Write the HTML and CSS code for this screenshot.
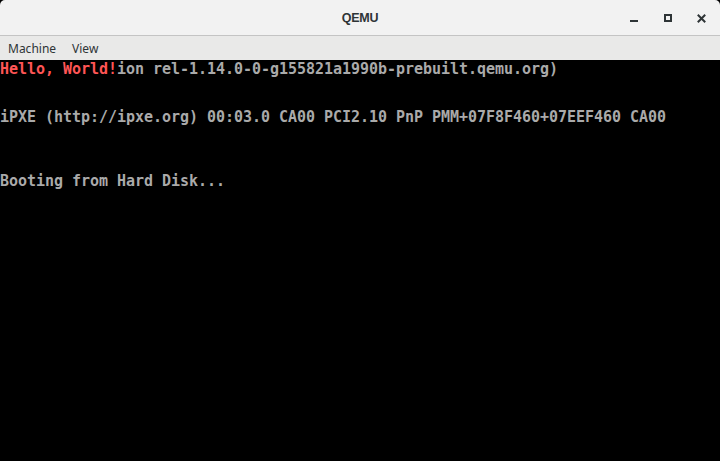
FILE: index.html
```html
<!DOCTYPE html>
<html>
<head>
<meta charset="utf-8">
<link rel="stylesheet" href="styles.css">
</head>
<body>
<div class="window">
  <header class="titlebar">
    <div class="title">QEMU</div>
    <div class="controls">
      <span class="ctl">
        <svg width="10" height="10" viewBox="0 0 10 10"><rect x="1" y="7" width="8" height="2" fill="#2e3436"/></svg>
      </span>
      <span class="ctl ctl-max">
        <svg width="10" height="10" viewBox="0 0 10 10"><rect x="1" y="2" width="6" height="6" fill="none" stroke="#2e3436" stroke-width="2"/></svg>
      </span>
      <span class="ctl">
        <svg width="10" height="10" viewBox="0 0 10 10"><path d="M1.5 2.5 L7.5 8.5 M7.5 2.5 L1.5 8.5" stroke="#2e3436" stroke-width="2" stroke-linecap="square"/></svg>
      </span>
    </div>
  </header>
  <nav class="menubar">
    <span class="menu">Machine</span>
    <span class="menu">View</span>
  </nav>
  <main class="screen">
<pre class="vga"><span class="red">Hello, World!</span>ion rel-1.14.0-0-g155821a1990b-prebuilt.qemu.org)


iPXE (http://ipxe.org) 00:03.0 CA00 PCI2.10 PnP PMM+07F8F460+07EEF460 CA00



Booting from Hard Disk...</pre>
  </main>
</div>
</body>
</html>
```
FILE: styles.css
```css
html, body {
  margin: 0;
  padding: 0;
  background: #000;
  height: 100%;
}
.window {
  display: flex;
  flex-direction: column;
  width: 720px;
  height: 461px;
  overflow: hidden;
}
.titlebar {
  position: relative;
  height: 35px;
  background: #f2f2f2;
  border-bottom: 1px solid #c4c4c4;
  border-radius: 5px 5px 0 0;
  display: flex;
  align-items: center;
  justify-content: center;
  flex: none;
}
.title {
  font-family: "Liberation Sans", Arial, sans-serif;
  font-weight: bold;
  font-size: 12.5px;
  color: #2e3436;
  letter-spacing: -0.2px;
}
.controls {
  position: absolute;
  right: 13px;
  top: 13px;
  display: flex;
  gap: 23px;
}
.ctl {
  display: flex;
  width: 10px;
  height: 10px;
}
.ctl:first-child {
  margin-right: 2px;
}
.menubar {
  height: 24px;
  background: #e9e9e8;
  display: flex;
  align-items: center;
  padding-left: 8px;
  gap: 16px;
  flex: none;
}
.menu {
  font-family: "Noto Sans", sans-serif;
  font-size: 12px;
  color: #2e3436;
}
.screen {
  flex: 1;
  background: #000;
  padding-top: 1px;
}
.vga {
  margin: 0;
  font-family: "DejaVu Sans Mono", monospace;
  font-weight: bold;
  font-size: 15px;
  letter-spacing: -0.03px;
  line-height: 16px;
  color: #aaaaaa;
}
.red {
  color: #ff5555;
}
```
